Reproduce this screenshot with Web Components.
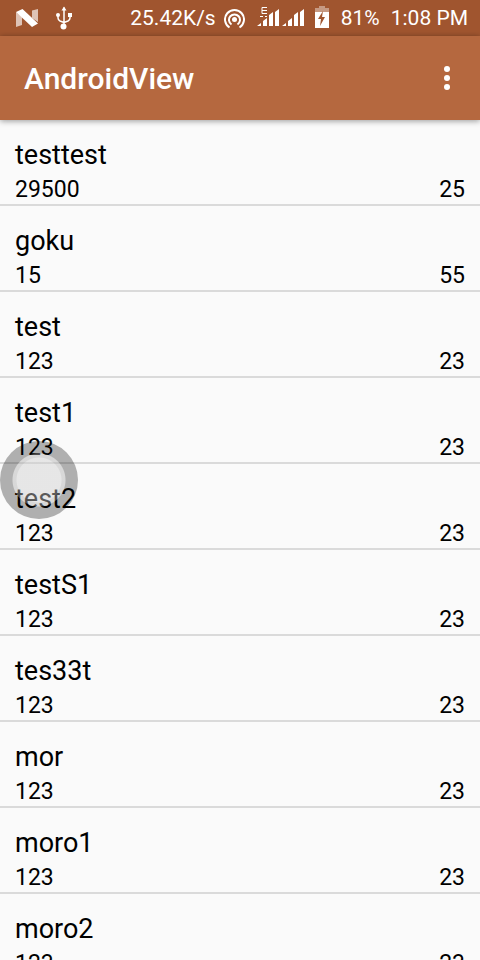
<!DOCTYPE html>
<html lang="en">
<head>
<meta charset="utf-8">
<meta name="viewport" content="width=device-width, initial-scale=1">
<title>AndroidView</title>
<style>
html, body { margin: 0; height: 100%; }
body { font-family: Roboto, "Liberation Sans", sans-serif; background: #fafafa; color: #000; overflow: hidden; }
</style>
</head>
<body>
<app-screen></app-screen>
<script>
const define = (name, html, setup) => customElements.define(name, class extends HTMLElement {
  constructor() {
    super();
    const template = document.createElement('template');
    template.innerHTML = html;
    this.attachShadow({ mode: 'open' }).append(template.content.cloneNode(true));
  }
  connectedCallback() { if (setup) setup(this.shadowRoot, this); }
});

define('status-bar', `
<style>
:host { display: flex; align-items: center; justify-content: space-between; height: 36px; flex: none; padding: 0 12px 0 16px; box-sizing: border-box; background: #a0552f; color: #fff; font-size: 21px; line-height: 38px; white-space: nowrap; }
div { display: flex; align-items: center; }
svg { display: block; flex: none; fill: #fff; }
.left { gap: 18px; }
.speed { margin-right: 8px; }
.cast { margin-right: 12px; }
.signal { margin-right: 10px; }
.battery { margin-right: 12px; }
.level { margin-right: 11px; }
</style>
<div class="left">
  <svg width="22" height="36" viewBox="16 0 22 36" aria-hidden="true"><path d="M16 12l6 5v8l-6 2zM32 10.500l6-1.500v13l-6-4z" opacity=".65"/><path d="M16 12L22.500 9L38 23.500L32 27z"/></svg>
  <svg width="16" height="36" viewBox="56 0 16 36" aria-hidden="true"><path d="M64 7.500v18M58 15v3q0 2 2 3l4 1.500M70 15v3q0 2-2 3l-4 1.500" fill="none" stroke="#fff" stroke-width="1.500"/><path d="M61.500 10.500L64 6.500l2.500 4zM68 13h4v4h-4z"/><circle cx="58" cy="15" r="2"/><circle cx="63.500" cy="26.500" r="3"/></svg>
</div>
<div>
  <span class="speed">25.42K/s</span>
  <svg class="cast" width="21" height="36" viewBox="224 0 21 36" aria-hidden="true"><circle cx="234.500" cy="19.500" r="2.500"/><path d="M231.500 24.500a5.500 5.500 0 1 1 6 0M229.500 27.500a9.500 9.500 0 1 1 10 0" fill="none" stroke="#fff" stroke-width="2"/></svg>
  <svg class="signal" width="48" height="36" viewBox="257 0 48 36" aria-hidden="true"><path d="M257 26l4-3v3zM263 21l4-3v8h-4zM269 15l4-3v14h-4zM275 12l4-3v17h-4zM282 26l4-3v3zM288 21l4-3v8h-4zM294 15l4-3v14h-4zM300 12l4-3v17h-4z"/><path d="M267 7.500h-5v6h5M262 10.500h5M260 16.500h3M265 16.500h2" fill="none" stroke="#fff"/></svg>
  <svg class="battery" width="14" height="36" viewBox="315 0 14 36" aria-hidden="true"><path d="M319 6h6v2h4v4h-14v-4h4z" opacity=".4"/><path d="M315 12h14v16h-14z"/><path d="M323 11l-5 8h3l-1 7 5-9h-3z" fill="#a0552f"/></svg>
  <span class="level">81%</span>
  <span>1:08 PM</span>
</div>`);

define('app-bar', `
<style>
:host { display: flex; align-items: center; justify-content: space-between; flex: none; height: 84px; padding: 0 15px 0 24px; box-sizing: border-box; background: #b5683f; color: #fff; box-shadow: 0 1px 6px rgba(0,0,0,.4); position: relative; z-index: 1; }
h1 { margin: 0; padding-top: 2px; font-size: 30px; line-height: 36px; font-weight: 500; }
button { display: block; border: 0; padding: 0; background: none; width: 36px; height: 48px; }
svg { display: block; margin: auto; fill: #fff; }
</style>
<h1><slot></slot></h1>
<button type="button" aria-label="More options"><svg width="6" height="24" viewBox="0 0 6 24"><circle cx="3" cy="3" r="3"/><circle cx="3" cy="12" r="3"/><circle cx="3" cy="21" r="3"/></svg></button>`);

define('item-row', `
<style>
:host { display: block; padding: 18px 15px 0; border-bottom: 2px solid #dadada; }
.name { font-size: 27px; line-height: 35px; }
.values { display: flex; justify-content: space-between; padding-top: 3px; font-size: 23px; line-height: 28px; }
</style>
<div class="name"><slot></slot></div>
<div class="values"><slot name="amount"></slot><slot name="count"></slot></div>`);

define('touch-button', `
<style>
:host { display: block; position: absolute; left: 0; top: 50%; transform: translateY(-50%); z-index: 2; }
button { display: block; border: 0; padding: 0; width: 78px; height: 78px; border-radius: 50%; background: radial-gradient(circle closest-side, rgba(205,205,205,.44) 22px, rgba(173,173,173,.44) 23px 26px, rgba(0,0,0,.3) 27px); }
</style>
<button type="button" aria-label="Quick actions"></button>`);

define('app-screen', `
<style>
:host { display: flex; flex-direction: column; height: 100vh; position: relative; overflow: hidden; background: #fafafa; }
main { flex: 1; min-height: 0; overflow: hidden; }
</style>
<status-bar></status-bar>
<app-bar>AndroidView</app-bar>
<main></main>
<touch-button></touch-button>`, root => {
  const items = [['testtest', 29500, 25], ['goku', 15, 55], ['test', 123, 23], ['test1', 123, 23], ['test2', 123, 23], ['testS1', 123, 23], ['tes33t', 123, 23], ['mor', 123, 23], ['moro1', 123, 23], ['moro2', 123, 23]];
  root.querySelector('main').innerHTML = items.map(([name, amount, count]) =>
    `<item-row>${name}<span slot="amount">${amount}</span><span slot="count">${count}</span></item-row>`).join('');
});
</script>
</body>
</html>
